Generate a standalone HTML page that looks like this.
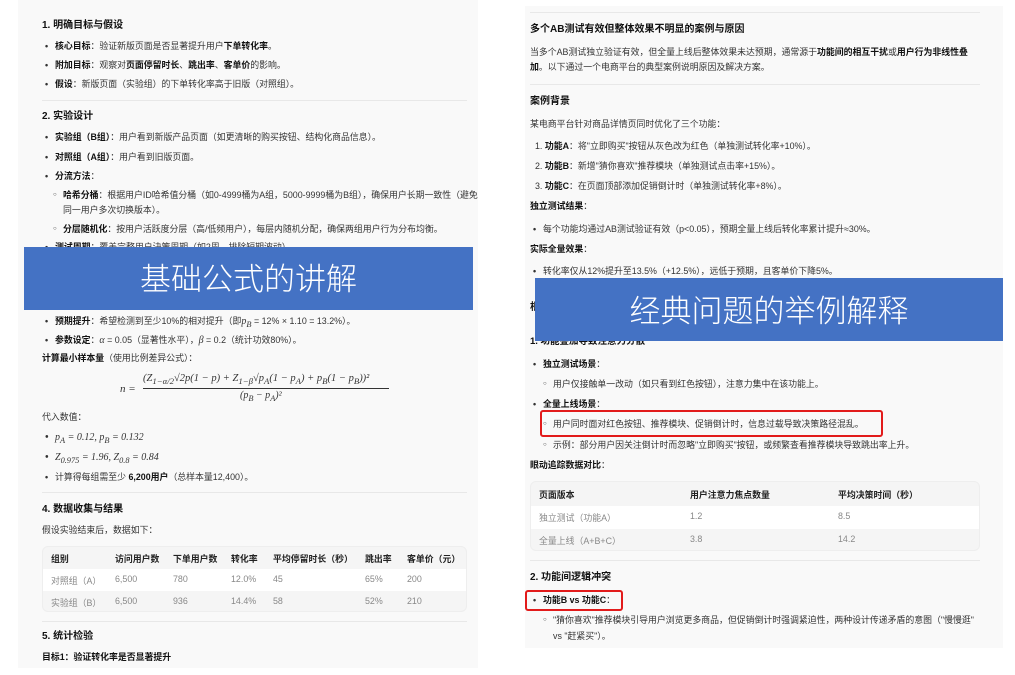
<!DOCTYPE html>
<html><head><meta charset="utf-8"><style>
*{margin:0;padding:0;box-sizing:border-box}
body{width:1015px;height:675px;background:#fff;position:relative;overflow:hidden;font-family:"Liberation Sans","Noto Sans CJK SC",sans-serif;color:#333;font-size:8.9px}
.p{position:absolute;background:#f9f9f9}
.l{position:absolute;white-space:nowrap;line-height:12px}
.h{font-weight:bold;font-size:10px;color:#111}
b{color:#111}
.d::before{content:"•";position:absolute;left:-10px;font-weight:bold}
.c::before{content:"○";position:absolute;left:-10px;font-size:6px}
.hr{position:absolute;height:1px;background:#e8e8e8}
.ban{position:absolute;background:#4472c4;color:#fff;font-size:31px;text-align:center;font-family:"Noto Sans CJK SC",sans-serif;font-weight:300}
.tb{position:absolute;border-radius:6px;background:#f5f5f5;border:1px solid #eee;overflow:hidden}
.tr{position:absolute;left:0;right:0;height:22px}
.tr span{position:absolute;top:5px;white-space:nowrap}
.th span{font-weight:bold;color:#222}
.g span{color:#888}
.red{position:absolute;border:2.5px solid #e21b1b;border-radius:3px}
.m{font-family:"Liberation Serif",serif;font-style:italic;font-size:10px}
</style></head><body>
<div class="p" style="left:18px;top:0;width:460px;height:668px"></div>
<div class="p" style="left:525px;top:6px;width:478px;height:642px"></div>

<!-- left -->
<div class="l h" style="left:42px;top:20px">1. 明确目标与假设</div>
<div class="l d" style="left:55px;top:40px"><b>核心目标</b>：验证新版页面是否显著提升用户<b>下单转化率</b>。</div>
<div class="l d" style="left:55px;top:59px"><b>附加目标</b>：观察对<b>页面停留时长</b>、<b>跳出率</b>、<b>客单价</b>的影响。</div>
<div class="l d" style="left:55px;top:78px"><b>假设</b>：新版页面（实验组）的下单转化率高于旧版（对照组）。</div>
<div class="hr" style="left:42px;top:100px;width:425px"></div>
<div class="l h" style="left:42px;top:111px">2. 实验设计</div>
<div class="l d" style="left:55px;top:131px"><b>实验组（B组）</b>：用户看到新版产品页面（如更清晰的购买按钮、结构化商品信息）。</div>
<div class="l d" style="left:55px;top:151px"><b>对照组（A组）</b>：用户看到旧版页面。</div>
<div class="l d" style="left:55px;top:170px"><b>分流方法</b>：</div>
<div class="l c" style="left:63px;top:189px"><b>哈希分桶</b>：根据用户ID哈希值分桶（如0-4999桶为A组，5000-9999桶为B组），确保用户长期一致性（避免</div>
<div class="l" style="left:63px;top:204px">同一用户多次切换版本）。</div>
<div class="l c" style="left:63px;top:223px"><b>分层随机化</b>：按用户活跃度分层（高/低频用户），每层内随机分配，确保两组用户行为分布均衡。</div>
<div class="l d" style="left:55px;top:241px"><b>测试周期</b>：覆盖完整用户決策周期（如2周，排除短期波动）</div>
<div class="l d" style="left:55px;top:315px"><b>预期提升</b>：希望检测到至少10%的相对提升（即<span class="m">p<sub>B</sub></span> = 12% × 1.10 = 13.2%）。</div>
<div class="l d" style="left:55px;top:334px"><b>参数设定</b>：<span class="m">α</span> = 0.05（显著性水平），<span class="m">β</span> = 0.2（统计功效80%）。</div>
<div class="l" style="left:42px;top:352px"><b>计算最小样本量</b>（使用比例差异公式）：</div>
<div class="l m" style="left:120px;top:383px;font-size:11px">n =</div>
<div class="l m" style="left:143px;top:373px;font-size:10.5px">(Z<sub>1−α/2</sub>√2p(1 − p) + Z<sub>1−β</sub>√p<sub>A</sub>(1 − p<sub>A</sub>) + p<sub>B</sub>(1 − p<sub>B</sub>))²</div>
<div class="hr" style="left:143px;top:388px;width:246px;background:#333"></div>
<div class="l m" style="left:240px;top:390px">(p<sub>B</sub> − p<sub>A</sub>)²</div>
<div class="l" style="left:42px;top:411px">代入数值：</div>
<div class="l d m" style="left:55px;top:432px">p<sub>A</sub> = 0.12, p<sub>B</sub> = 0.132</div>
<div class="l d m" style="left:55px;top:452px">Z<sub>0.975</sub> = 1.96, Z<sub>0.8</sub> = 0.84</div>
<div class="l d" style="left:55px;top:471px">计算得每组需至少 <b>6,200用户</b>（总样本量12,400）。</div>
<div class="hr" style="left:42px;top:492px;width:425px"></div>
<div class="l h" style="left:42px;top:504px">4. 数据收集与结果</div>
<div class="l" style="left:42px;top:524px">假设实验结束后，数据如下：</div>
<div class="tb" style="left:42px;top:546px;width:425px;height:66px">
<div class="tr th" style="top:0"><span style="left:8px">组别</span><span style="left:72px">访问用户数</span><span style="left:130px">下单用户数</span><span style="left:188px">转化率</span><span style="left:230px">平均停留时长（秒）</span><span style="left:322px">跳出率</span><span style="left:364px">客单价（元）</span></div>
<div class="tr g" style="top:22px;background:#fff"><span style="left:8px">对照组（A）</span><span style="left:72px">6,500</span><span style="left:130px">780</span><span style="left:188px">12.0%</span><span style="left:230px">45</span><span style="left:322px">65%</span><span style="left:364px">200</span></div>
<div class="tr g" style="top:44px"><span style="left:8px">实验组（B）</span><span style="left:72px">6,500</span><span style="left:130px">936</span><span style="left:188px">14.4%</span><span style="left:230px">58</span><span style="left:322px">52%</span><span style="left:364px">210</span></div>
</div>
<div class="hr" style="left:42px;top:621px;width:425px"></div>
<div class="l h" style="left:42px;top:631px">5. 统计检验</div>
<div class="l" style="left:42px;top:651px"><b>目标1：验证转化率是否显著提升</b></div>
<div class="ban" style="left:24px;top:247px;width:449px;height:63px;line-height:60px">基础公式的讲解</div>

<!-- right -->
<div class="hr" style="left:530px;top:12px;width:450px"></div>
<div class="l h" style="left:530px;top:24px">多个AB测试有效但整体效果不明显的案例与原因</div>
<div class="l" style="left:530px;top:46px">当多个AB测试独立验证有效，但全量上线后整体效果未达预期，通常源于<b>功能间的相互干扰</b>或<b>用户行为非线性叠</b></div>
<div class="l" style="left:530px;top:61px"><b>加</b>。以下通过一个电商平台的典型案例说明原因及解决方案。</div>
<div class="hr" style="left:530px;top:84px;width:450px"></div>
<div class="l h" style="left:530px;top:96px">案例背景</div>
<div class="l" style="left:530px;top:118px">某电商平台针对商品详情页同时优化了三个功能：</div>
<div class="l" style="left:535px;top:140px">1. <b>功能A</b>：将"立即购买"按钮从灰色改为红色（单独测试转化率+10%）。</div>
<div class="l" style="left:535px;top:160px">2. <b>功能B</b>：新增"猜你喜欢"推荐模块（单独测试点击率+15%）。</div>
<div class="l" style="left:535px;top:180px">3. <b>功能C</b>：在页面顶部添加促销倒计时（单独测试转化率+8%）。</div>
<div class="l" style="left:530px;top:200px"><b>独立测试结果</b>：</div>
<div class="l d" style="left:543px;top:223px">每个功能均通过AB测试验证有效（p&lt;0.05），预期全量上线后转化率累计提升≈30%。</div>
<div class="l" style="left:530px;top:243px"><b>实际全量效果</b>：</div>
<div class="l d" style="left:543px;top:265px">转化率仅从12%提升至13.5%（+12.5%），远低于预期，且客单价下降5%。</div>
<div class="l h" style="left:530px;top:302px">根本原因分析</div>
<div class="l h" style="left:530px;top:336px;font-size:9.5px">1. 功能叠加导致注意力分散</div>
<div class="l d" style="left:543px;top:358px"><b>独立测试场景</b>：</div>
<div class="l c" style="left:553px;top:378px">用户仅接触单一改动（如只看到红色按钮），注意力集中在该功能上。</div>
<div class="l d" style="left:543px;top:398px"><b>全量上线场景</b>：</div>
<div class="l c" style="left:553px;top:418px">用户同时面对红色按钮、推荐模块、促销倒计时，信息过载导致决策路径混乱。</div>
<div class="l c" style="left:553px;top:439px">示例：部分用户因关注倒计时而忽略"立即购买"按钮，或频繁查看推荐模块导致跳出率上升。</div>
<div class="l" style="left:530px;top:459px"><b>眼动追踪数据对比</b>：</div>
<div class="tb" style="left:530px;top:481px;width:450px;height:70px">
<div class="tr th" style="top:1px"><span style="left:8px">页面版本</span><span style="left:159px">用户注意力焦点数量</span><span style="left:307px">平均决策时间（秒）</span></div>
<div class="tr g" style="top:24px;background:#fff;height:23px"><span style="left:8px">独立测试（功能A）</span><span style="left:159px">1.2</span><span style="left:307px">8.5</span></div>
<div class="tr g" style="top:47px"><span style="left:8px">全量上线（A+B+C）</span><span style="left:159px">3.8</span><span style="left:307px">14.2</span></div>
</div>
<div class="hr" style="left:530px;top:560px;width:450px"></div>
<div class="l h" style="left:530px;top:572px">2. 功能间逻辑冲突</div>
<div class="l d" style="left:543px;top:594px"><b>功能B vs 功能C</b>：</div>
<div class="l c" style="left:553px;top:614px">"猜你喜欢"推荐模块引导用户浏览更多商品，但促销倒计时强调紧迫性，两种设计传递矛盾的意图（"慢慢逛"</div>
<div class="l" style="left:553px;top:630px">vs "赶紧买"）。</div>
<div class="red" style="left:540px;top:410px;width:343px;height:27px"></div>
<div class="red" style="left:525px;top:590px;width:98px;height:21px"></div>
<div class="ban" style="left:535px;top:278px;width:468px;height:63px;line-height:62px">经典问题的举例解释</div>
</body></html>
